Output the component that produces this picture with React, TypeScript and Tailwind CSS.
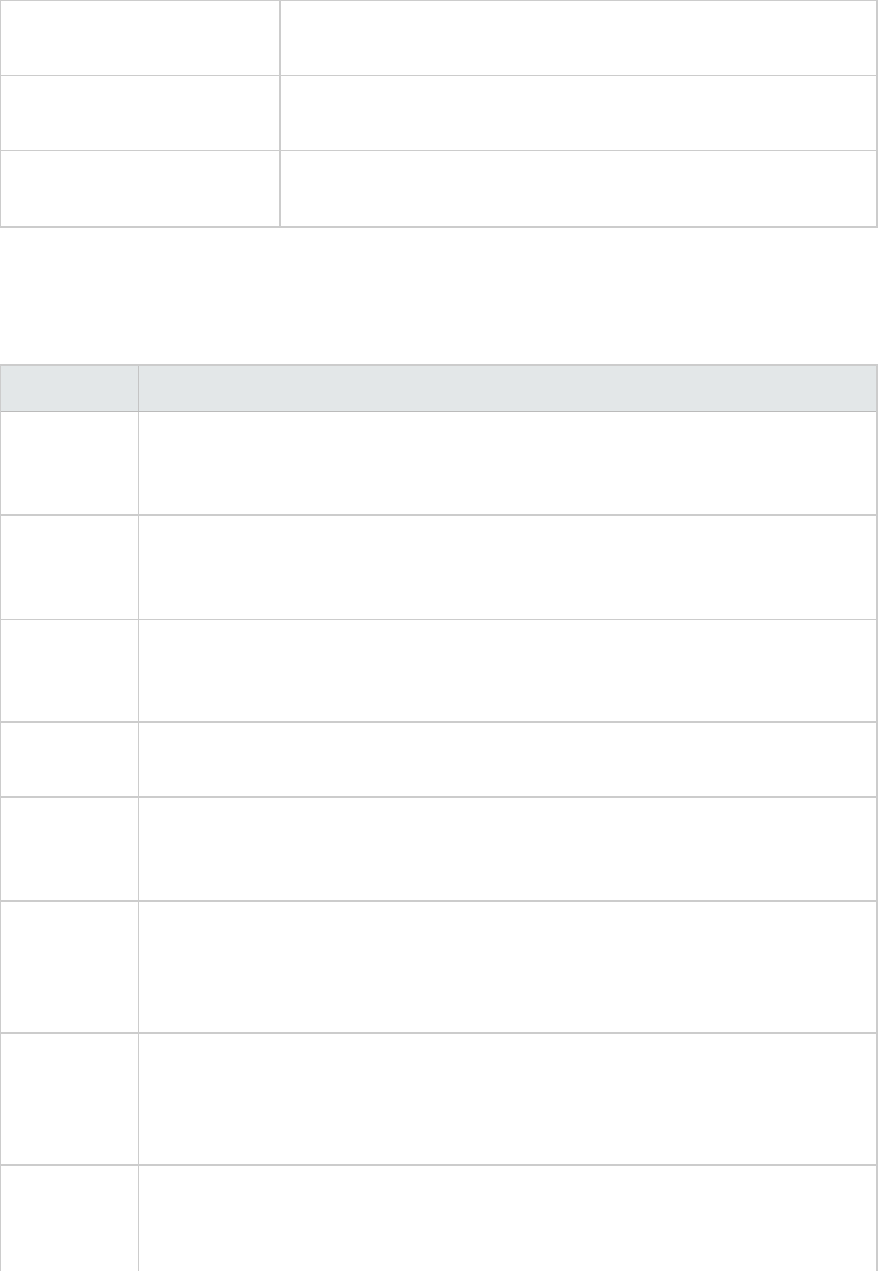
export default function App() {
  const topRows = [75, 75, 75];
  const rows = [
    { h: 104, b: 'border-b-2' },
    { h: 104, b: 'border-b' },
    { h: 103, b: 'border-b-2' },
    { h: 75, b: 'border-b-2' },
    { h: 104, b: 'border-b-2' },
    { h: 132, b: 'border-b-2' },
    { h: 132, b: 'border-b-2' },
    { h: 110, b: '' },
  ];

  return (
    <div className="w-[879px] min-h-[1271px] bg-white font-['Liberation_Sans',sans-serif] text-[14px] text-[#333]">
      {/* First table */}
      <div className="w-[878px] border-t border-l border-r-2 border-b-2 border-[#cccccc]">
        {topRows.map((h, i) => (
          <div
            key={i}
            className={`flex ${i < topRows.length - 1 ? 'border-b border-[#cccccc]' : ''}`}
            style={{ height: h }}
          >
            <div className="w-[280px] shrink-0 border-r-2 border-[#cccccc]" />
            <div className="flex-1" />
          </div>
        ))}
      </div>

      {/* Second table */}
      <div className="mt-[136px] w-[878px] border-t-2 border-l border-r-2 border-[#cccccc]">
        <div className="flex h-[46px] bg-[#e3e7e8] border-b border-[#bbbbbb]">
          <div className="w-[138px] shrink-0 border-r border-[#c4c4c4]" />
          <div className="flex-1" />
        </div>
        {rows.map((r, i) => (
          <div key={i} className={`flex border-[#cccccc] ${r.b}`} style={{ height: r.h }}>
            <div className="w-[138px] shrink-0 border-r border-[#cccccc]" />
            <div className="flex-1" />
          </div>
        ))}
      </div>
    </div>
  );
}
